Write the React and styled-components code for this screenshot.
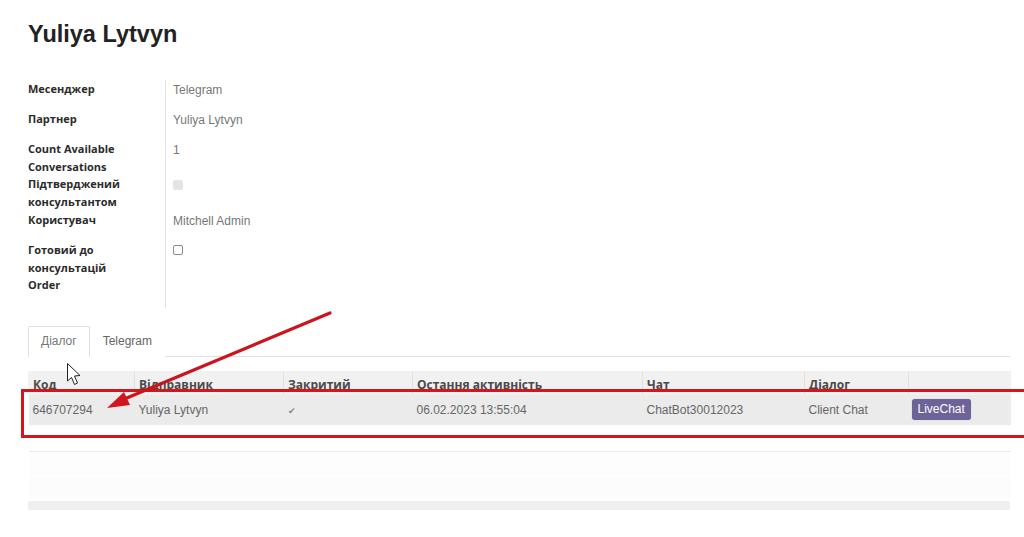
import React from "react";
import styled, { createGlobalStyle } from "styled-components";

const GlobalStyle = createGlobalStyle`
  html, body {
    margin: 0;
    padding: 0;
    background: #fff;
  }
  body {
    font-family: "Liberation Sans", Arial, sans-serif;
    font-size: 12px;
    color: #666;
  }
`;

const Page = styled.div`
  position: relative;
  width: 1024px;
  height: 537px;
  overflow: hidden;
  padding: 20px 14px 0 28px;
  box-sizing: border-box;
`;

const Title = styled.h1`
  margin: 0;
  font-family: "Liberation Sans", Arial, sans-serif;
  font-size: 23.5px;
  line-height: 28px;
  font-weight: bold;
  color: #222;
`;

const Fields = styled.div`
  display: grid;
  grid-template-columns: 137px 1fr;
  margin-top: 32px;
  width: 360px;
`;

const Label = styled.div`
  min-height: 30px;
  font-family: "Open Sans", sans-serif;
  font-size: 11px;
  font-weight: bold;
  line-height: 17.7px;
  color: #2b2b2b;
  padding-right: 8px;
`;

const Value = styled.div`
  min-height: ${(p) => (p.$tall ? "32px" : "30px")};
  border-left: 1px solid #e3e3e3;
  padding: 2px 0 0 7px;
  box-sizing: border-box;
  font-size: 12px;
  line-height: 17.5px;
  color: #777;
`;

const Check = styled.span`
  display: inline-block;
  vertical-align: middle;
  margin-top: -3px;
  width: 10px;
  height: 10px;
  box-sizing: border-box;
  border-radius: 2px;
  background: ${(p) => (p.$disabled ? "#e4e4e4" : "#fff")};
  border: 1px solid ${(p) => (p.$disabled ? "#e4e4e4" : "#8a8a8a")};
`;

const Tabs = styled.div`
  display: flex;
  margin-top: 18px;
  border-bottom: 1px solid #e0e0e0;
`;

const Tab = styled.div`
  padding: 6px 12px 7px;
  line-height: 17px;
  font-size: 12px;
  color: ${(p) => (p.$active ? "#777" : "#666")};
  border: 1px solid ${(p) => (p.$active ? "#e0e0e0" : "transparent")};
  border-bottom: none;
  border-radius: 2px 2px 0 0;
  background: #fff;
  margin-bottom: -1px;
`;

const Table = styled.table`
  margin-top: 14px;
  width: 982px;
  border-collapse: collapse;
  table-layout: fixed;
`;

const Th = styled.th`
  box-sizing: border-box;
  width: ${(p) => p.$w}px;
  height: 24px;
  padding: 0 4px 2px;
  text-align: left;
  font-family: "Open Sans", sans-serif;
  font-size: 12px;
  font-weight: bold;
  color: #4a4a4a;
  background: #f1f1f1;
  border-left: 1px solid ${(p) => (p.$first ? "#f1f1f1" : "#e2e2e2")};
  vertical-align: bottom;
  white-space: nowrap;
  overflow: hidden;
`;

const Row = styled.tr`
  height: ${(p) => p.$h}px;
  background: ${(p) => p.$bg};
  border-bottom: 1px solid ${(p) => p.$line || "transparent"};
`;

const Td = styled.td`
  padding: 0 4px;
  font-size: 12px;
  color: #666;
  white-space: nowrap;
  overflow: hidden;
`;

const Tick = styled.span`
  font-size: 9px;
  color: #888;
`;

const Button = styled.button`
  margin-left: -1px;
  padding: 3px 6px;
  height: 21px;
  border: none;
  border-radius: 3px;
  background: #6d6399;
  color: #fff;
  font-family: "Liberation Sans", Arial, sans-serif;
  font-size: 12px;
  line-height: 15px;
  box-shadow: 0 0 1px rgba(0, 0, 0, 0.3);
`;

const Footer = styled.div`
  width: 982px;
  height: 9px;
  background: #efefef;
  border-radius: 2px;
`;

const Overlay = styled.svg`
  position: absolute;
  left: 0;
  top: 0;
  pointer-events: none;
`;

const fields = [
  { label: "Месенджер", value: "Telegram" },
  { label: "Партнер", value: "Yuliya Lytvyn" },
  { label: ["Count Available", "Conversations"], value: "1" },
  { label: ["Підтверджений", "консультантом"], value: <Check $disabled /> },
  { label: "Користувач", value: "Mitchell Admin" },
  { label: ["Готовий до", "консультацій"], value: <Check /> },
  { label: "Order", value: "", tall: true },
];

const columns = [
  { title: "Код", w: 106 },
  { title: "Відправник", w: 149 },
  { title: "Закритий", w: 129 },
  { title: "Остання активність", w: 230 },
  { title: "Чат", w: 162 },
  { title: "Діалог", w: 104 },
  { title: "", w: 102 },
];

function App() {
  return (
    <Page>
      <GlobalStyle />
      <Title>Yuliya Lytvyn</Title>

      <Fields>
        {fields.map((f, i) => (
          <React.Fragment key={i}>
            <Label>
              {Array.isArray(f.label)
                ? f.label.map((l) => <div key={l}>{l}</div>)
                : f.label}
            </Label>
            <Value $tall={f.tall}>{f.value}</Value>
          </React.Fragment>
        ))}
      </Fields>

      <Tabs>
        <Tab $active>Діалог</Tab>
        <Tab>Telegram</Tab>
      </Tabs>

      <Table>
        <thead>
          <tr>
            {columns.map((c, i) => (
              <Th key={i} $w={c.w} $first={i === 0}>
                {c.title}
              </Th>
            ))}
          </tr>
        </thead>
        <tbody>
          <Row $h={30} $bg="#ebebeb">
            <Td>646707294</Td>
            <Td>Yuliya Lytvyn</Td>
            <Td>
              <Tick>✔</Tick>
            </Td>
            <Td>06.02.2023 13:55:04</Td>
            <Td>ChatBot30012023</Td>
            <Td>Client Chat</Td>
            <Td>
              <Button>LiveChat</Button>
            </Td>
          </Row>
          <Row $h={26} $bg="#fff" $line="#ececec">
            <Td colSpan={7} />
          </Row>
          <Row $h={25} $bg="#fdfdfd">
            <Td colSpan={7} />
          </Row>
          <Row $h={24} $bg="#fcfcfc">
            <Td colSpan={7} />
          </Row>
        </tbody>
      </Table>
      <Footer />

      {/* red annotation drawn over the screenshot, open on the right edge */}
      <Overlay width="1024" height="537" viewBox="0 0 1024 537">
        <path
          d="M1040 390.5 H22.5 V436.5 H1040"
          fill="none"
          stroke="#d2161f"
          strokeWidth="3"
        />
        <line
          x1="330"
          y1="313"
          x2="122"
          y2="400"
          stroke="#c9161e"
          strokeWidth="3.2"
          strokeLinecap="round"
        />
        <polygon points="107,408 124,392 130,405" fill="#d0161e" />
        <path
          d="M67.5 363.5 L67.5 381 L71.5 377.5 L74.5 384.5 L77.5 383 L74.5 376 L80 375.5 Z"
          fill="#fff"
          stroke="#222"
          strokeWidth="1"
          strokeLinejoin="round"
        />
      </Overlay>
    </Page>
  );
}

export default App;
